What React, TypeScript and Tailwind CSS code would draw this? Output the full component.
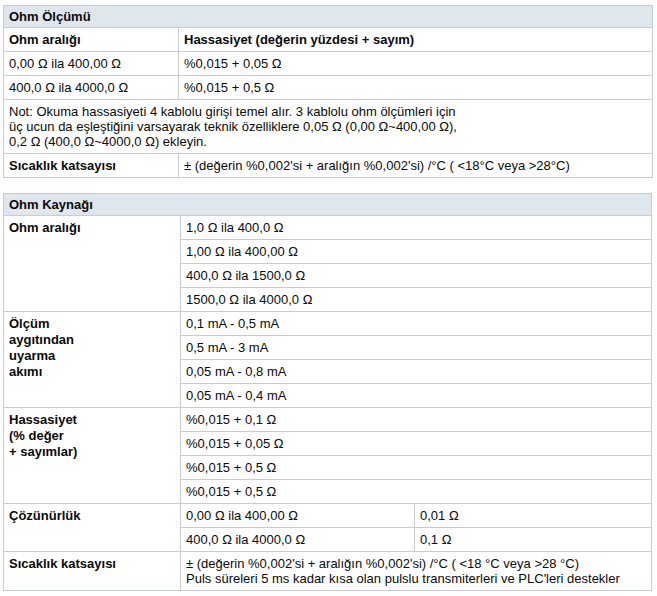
import React from "react";

const td = "border border-[#c7cdd3] px-[5px] py-[4px] align-top leading-[15px]";
const tdR = "border border-[#c7cdd3] pl-[5px] pr-[5px] py-[4px] align-top leading-[15px]";
const lbl = "border border-[#c7cdd3] px-[5px] py-[4px] align-top leading-[16px] font-bold";

function Header({ title, span }: { title: string; span: number }) {
  return (
    <tr>
      <td colSpan={span} className="border border-[#c7cdd3] bg-[#dfe6ed] px-[5px] py-[3px] leading-[15px] font-bold">
        {title}
      </td>
    </tr>
  );
}

export default function App() {
  const ohmRanges = ["1,0 Ω ila 400,0 Ω", "1,00 Ω ila 400,00 Ω", "400,0 Ω ila 1500,0 Ω", "1500,0 Ω ila 4000,0 Ω"];
  const currents = ["0,1 mA - 0,5 mA", "0,5 mA - 3 mA", "0,05 mA - 0,8 mA", "0,05 mA - 0,4 mA"];
  const acc = ["%0,015 + 0,1 Ω", "%0,015 + 0,05 Ω", "%0,015 + 0,5 Ω", "%0,015 + 0,5 Ω"];
  return (
    <div className="bg-white w-[657px] h-[596px] pl-[3px] pt-[5px] text-[13px] text-[#0a0a0a] font-['Liberation_Sans',Arial,sans-serif]">
      <table className="w-[650px] border-collapse table-fixed">
        <colgroup>
          <col className="w-[175px]" />
          <col />
        </colgroup>
        <tbody>
          <Header title="Ohm Ölçümü" span={2} />
          <tr>
            <td className={td + " font-bold"}>Ohm aralığı</td>
            <td className={tdR + " font-bold"}>Hassasiyet (değerin yüzdesi + sayım)</td>
          </tr>
          <tr>
            <td className={td}>0,00 Ω ila 400,00 Ω</td>
            <td className={tdR}>%0,015 + 0,05 Ω</td>
          </tr>
          <tr>
            <td className={td}>400,0 Ω ila 4000,0 Ω</td>
            <td className={tdR}>%0,015 + 0,5 Ω</td>
          </tr>
          <tr>
            <td colSpan={2} className={td}>
              Not: Okuma hassasiyeti 4 kablolu girişi temel alır. 3 kablolu ohm ölçümleri için
              <br />
              üç ucun da eşleştiğini varsayarak teknik özelliklere 0,05 Ω (0,00 Ω~400,00 Ω),
              <br />
              0,2 Ω (400,0 Ω~4000,0 Ω) ekleyin.
            </td>
          </tr>
          <tr>
            <td className={td + " font-bold"}>Sıcaklık katsayısı</td>
            <td className={tdR}>± (değerin %0,002'si + aralığın %0,002'si) /°C ( &lt;18°C veya &gt;28°C)</td>
          </tr>
        </tbody>
      </table>

      <table className="mt-[15px] w-[649px] border-collapse table-fixed">
        <colgroup>
          <col className="w-[177px]" />
          <col className="w-[234px]" />
          <col />
        </colgroup>
        <tbody>
          <Header title="Ohm Kaynağı" span={3} />
          {ohmRanges.map((r, i) => (
            <tr key={r}>
              {i === 0 && (
                <td rowSpan={4} className={lbl}>
                  Ohm aralığı
                </td>
              )}
              <td colSpan={2} className={tdR}>{r}</td>
            </tr>
          ))}
          {currents.map((r, i) => (
            <tr key={"c" + i}>
              {i === 0 && (
                <td rowSpan={4} className={lbl}>
                  Ölçüm
                  <br />
                  aygıtından
                  <br />
                  uyarma
                  <br />
                  akımı
                </td>
              )}
              <td colSpan={2} className={tdR}>{r}</td>
            </tr>
          ))}
          {acc.map((r, i) => (
            <tr key={"a" + i}>
              {i === 0 && (
                <td rowSpan={4} className={lbl}>
                  Hassasiyet
                  <br />
                  (% değer
                  <br />
                  + sayımlar)
                </td>
              )}
              <td colSpan={2} className={tdR}>{r}</td>
            </tr>
          ))}
          <tr>
            <td rowSpan={2} className={lbl}>Çözünürlük</td>
            <td className={tdR}>0,00 Ω ila 400,00 Ω</td>
            <td className={tdR}>0,01 Ω</td>
          </tr>
          <tr>
            <td className={tdR}>400,0 Ω ila 4000,0 Ω</td>
            <td className={tdR}>0,1 Ω</td>
          </tr>
          <tr>
            <td className={lbl}>Sıcaklık katsayısı</td>
            <td colSpan={2} className={tdR}>
              ± (değerin %0,002'si + aralığın %0,002'si) /°C ( &lt;18 °C veya &gt;28 °C)
              <br />
              Puls süreleri 5 ms kadar kısa olan pulslu transmiterleri ve PLC'leri destekler
            </td>
          </tr>
        </tbody>
      </table>
    </div>
  );
}
